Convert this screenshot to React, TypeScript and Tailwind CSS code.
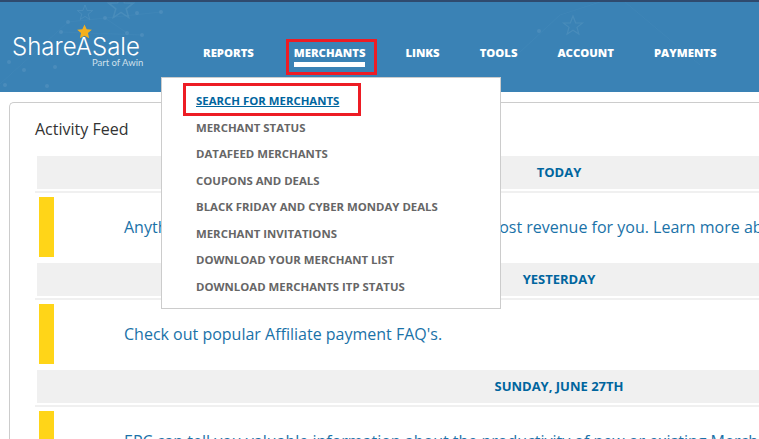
import React from "react";

const navItems = ["REPORTS", "MERCHANTS", "LINKS", "TOOLS", "ACCOUNT", "PAYMENTS"];

const menuItems = [
  "SEARCH FOR MERCHANTS",
  "MERCHANT STATUS",
  "DATAFEED MERCHANTS",
  "COUPONS AND DEALS",
  "BLACK FRIDAY AND CYBER MONDAY DEALS",
  "MERCHANT INVITATIONS",
  "DOWNLOAD YOUR MERCHANT LIST",
  "DOWNLOAD MERCHANTS ITP STATUS",
];

const feed = [
  {
    day: "TODAY",
    text: "Anything you can do to find out which earns the most revenue for you. Learn more about it today and see more.",
  },
  { day: "YESTERDAY", text: "Check out popular Affiliate payment FAQ's." },
  {
    day: "SUNDAY, JUNE 27TH",
    text: "EPC can tell you valuable information about the productivity of new or existing Merchants in your account.",
  },
];

// faint stars and dots behind the logo
function HeaderDecor() {
  const star = "M0 -10 L2.6 -3.2 L9.5 -3 L4 1.4 L5.9 8.1 L0 4.2 L-5.9 8.1 L-4 1.4 L-9.5 -3 L-2.6 -3.2 Z";
  const dots = [
    [68, 22], [61, 32], [105, 18], [137, 13], [161, 12], [127, 33], [142, 35],
    [24, 70], [9, 62], [55, 67], [47, 86], [5, 85], [539, 31],
  ];
  return (
    <svg className="absolute left-0 top-0" width="759" height="90" fill="none">
      <g transform="translate(0 -2)">
        <g stroke="#5f9ac4" strokeOpacity="0.4" strokeWidth="1.2">
          <path d={star} transform="translate(121 7) scale(1.3)" />
          <path d={star} transform="translate(85 13) scale(0.8)" />
          <path d={star} transform="translate(573 26) scale(1)" />
        </g>
        <g stroke="#5f9ac4" strokeOpacity="0.14">
          <path d="M0 84 L68 22 L161 12" />
          <path d="M61 32 L142 35 M105 18 L127 33" />
          <path d="M520 52 L560 15 L600 2 M625 2 L700 65" />
        </g>
        <g fill="#5f9ac4" fillOpacity="0.45">
          {dots.map(([x, y], i) => (
            <circle key={i} cx={x} cy={y} r="2" />
          ))}
        </g>
      </g>
    </svg>
  );
}

function Logo() {
  return (
    <div className="relative w-[140px] shrink-0 pl-3 pt-[35px] font-['Inter',sans-serif] text-white">
      <svg className="absolute left-[77px] top-[22px]" width="15" height="15" viewBox="-10 -10.5 20 20">
        <path
          d="M0 -10 L2.9 -3.4 L9.8 -3 L4.6 1.6 L6.2 8.6 L0 5 L-6.2 8.6 L-4.6 1.6 L-9.8 -3 L-2.9 -3.4 Z"
          fill="#f5b01e"
        />
      </svg>
      <div className="text-[24px] leading-[20px] font-light whitespace-nowrap">ShareASale</div>
      <div className="ml-[80px] font-['Lato',sans-serif] text-[9.5px] leading-[12px] whitespace-nowrap text-[#cfe0ec]">
        Part of Awin
      </div>
    </div>
  );
}

function Nav() {
  return (
    <nav className="ml-[63px] flex gap-10 pt-[44px] font-['Open_Sans',sans-serif] text-[11.3px] leading-[14px] font-extrabold text-white">
      {navItems.map((item) => (
        <div key={item} className="relative whitespace-nowrap">
          {item}
          {item === "MERCHANTS" && <div className="absolute left-0 right-0 top-[16px] h-[5px] bg-white" />}
        </div>
      ))}
    </nav>
  );
}

function MerchantsMenu() {
  return (
    <div className="absolute left-[161px] top-[77px] z-10 h-[232px] w-[340px] border border-[#cccccc] bg-white pl-[34px] pt-[10px] font-['Open_Sans',sans-serif] text-[11.4px] font-bold">
      {menuItems.map((item, i) => (
        <div
          key={item}
          className={
            i === 0
              ? "h-[26.5px] leading-[26.5px] whitespace-nowrap text-[#00659e] underline"
              : "h-[26.5px] leading-[26.5px] whitespace-nowrap text-[#666666]"
          }
        >
          {item}
        </div>
      ))}
    </div>
  );
}

export default function App() {
  return (
    <div className="relative h-[439px] w-[759px] overflow-hidden bg-white font-['Open_Sans',sans-serif]">
      <div className="h-[2px] bg-[#2f4a6e]" />
      <header className="relative flex h-[90px] bg-[#3a82b5]">
        <HeaderDecor />
        <div className="relative flex">
          <Logo />
          <Nav />
        </div>
      </header>

      <main className="ml-[9px] mt-[10px] w-[1100px] rounded-tl-[5px] border-l border-t border-[#cccccc] pl-[27px]">
        <h2 className="ml-[-2px] h-[53px] pt-[15px] text-[16px] leading-[22px] text-[#333333]">Activity Feed</h2>
        <div className="w-[1044px]">
          {feed.map((row) => (
            <section key={row.day} className="h-[107px]">
              <div className="h-[33px] bg-[#f0f0f0] text-center text-[13px] leading-[33px] font-bold text-[#00659e]">
                {row.day}
              </div>
              <div className="ml-[-2px] mt-[2px] h-[2px] bg-[#f0f0f0]" />
              <div className="mt-[4px] flex h-[60px] pl-[2px]">
                <div className="h-[60px] w-[15px] shrink-0 bg-[#ffd518]" />
                <p className="ml-[70px] whitespace-nowrap text-[16px] leading-[60px] text-[#1a72a8]">{row.text}</p>
              </div>
            </section>
          ))}
        </div>
      </main>

      <MerchantsMenu />

      {/* red annotation boxes from the screenshot */}
      <div className="absolute left-[286px] top-[39px] z-20 h-[36px] w-[91px] border-[3px] border-[#ed1c24]" />
      <div className="absolute left-[183px] top-[83px] z-20 h-[33px] w-[178px] border-[3px] border-[#ed1c24]" />
    </div>
  );
}
